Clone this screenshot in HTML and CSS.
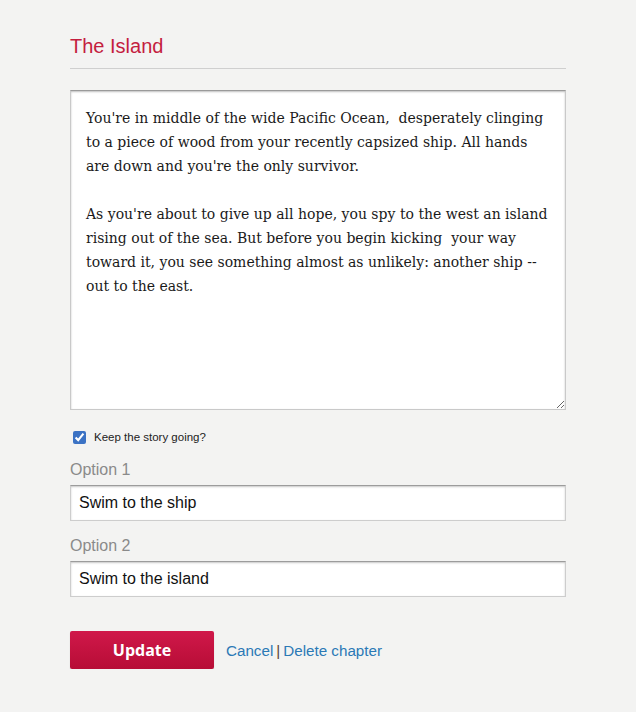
FILE: index.html
```html
<!DOCTYPE html>
<html>
<head>
<meta charset="utf-8">
<link rel="stylesheet" href="styles.css">
</head>
<body>
<main class="page">
  <h1 class="title">The Island</h1>
  <hr class="rule">
  <form class="form">
    <textarea class="story" wrap="off">You're in middle of the wide Pacific Ocean,  desperately clinging
to a piece of wood from your recently capsized ship. All hands
are down and you're the only survivor.

As you're about to give up all hope, you spy to the west an island
rising out of the sea. But before you begin kicking  your way
toward it, you see something almost as unlikely: another ship --
out to the east.</textarea>
    <label class="check"><input type="checkbox" checked> <span>Keep the story going?</span></label>
    <label class="field-label">Option 1</label>
    <input class="field" type="text" value="Swim to the ship">
    <label class="field-label">Option 2</label>
    <input class="field" type="text" value="Swim to the island">
    <div class="actions">
      <button type="button" class="btn">Update</button>
      <span class="links"><a href="#">Cancel</a><span class="sep">|</span><a href="#">Delete chapter</a></span>
    </div>
  </form>
</main>
</body>
</html>
```
FILE: styles.css
```css
html, body {
  margin: 0;
  background: #f3f3f2;
}
body {
  font-family: "Liberation Sans", Arial, sans-serif;
}
.page {
  width: 496px;
  margin-left: 70px;
  padding-top: 34px;
}
.title {
  margin: 0;
  font-weight: normal;
  font-size: 20px;
  line-height: 24px;
  color: #c41d3f;
}
.rule {
  margin: 10px 0 0;
  border: 0;
  border-top: 1px solid #cfcfcf;
  height: 0;
}
.form {
  display: flex;
  flex-direction: column;
}
.story {
  margin-top: 21px;
  box-sizing: border-box;
  width: 496px;
  height: 320px;
  padding: 15px 15px 13px;
  font-family: "DejaVu Serif", Georgia, serif;
  font-size: 14px;
  line-height: 24px;
  color: #1a1a1a;
  background: #fff;
  border: 1px solid #c9c9c9;
  border-top-color: #9a9a9a;
  box-shadow: inset 0 1px 2px rgba(0,0,0,0.25);
  white-space: pre;
  overflow: hidden;
  resize: vertical;
  outline: none;
}
.check {
  display: flex;
  align-items: center;
  margin-top: 19px;
  font-size: 11.5px;
  color: #222;
  height: 16px;
}
.check input {
  margin: 0 8px 0 3px;
  width: 13px;
  height: 13px;
  accent-color: #3b72c4;
}
.field-label {
  margin-top: 16px;
  font-size: 16px;
  line-height: 18px;
  color: #8a8a8a;
}
.field {
  margin-top: 6px;
  box-sizing: border-box;
  width: 496px;
  height: 36px;
  padding: 0 8px;
  font-family: "Liberation Sans", Arial, sans-serif;
  font-size: 16px;
  color: #111;
  background: #fff;
  border: 1px solid #cdcdcd;
  border-top-color: #9c9c9c;
  box-shadow: inset 0 1px 2px rgba(0,0,0,0.22);
  outline: none;
}
.field + .field-label {
  margin-top: 16px;
}
.actions {
  display: flex;
  align-items: center;
  margin-top: 34px;
  gap: 12px;
}
.btn {
  width: 144px;
  height: 38px;
  border: 0;
  border-radius: 2px;
  background: linear-gradient(#d0184a, #b70d36);
  color: #fff;
  font-family: "Open Sans", sans-serif;
  font-weight: 700;
  font-size: 16px;
  box-shadow: 0 1px 1px rgba(0,0,0,0.2);
  padding: 0;
}
.links {
  font-size: 15.2px;
  color: #2b79b6;
}
.links a {
  color: #2b79b6;
  text-decoration: none;
}
.sep {
  color: #5a3f35;
  margin: 0 3px;
}
```
